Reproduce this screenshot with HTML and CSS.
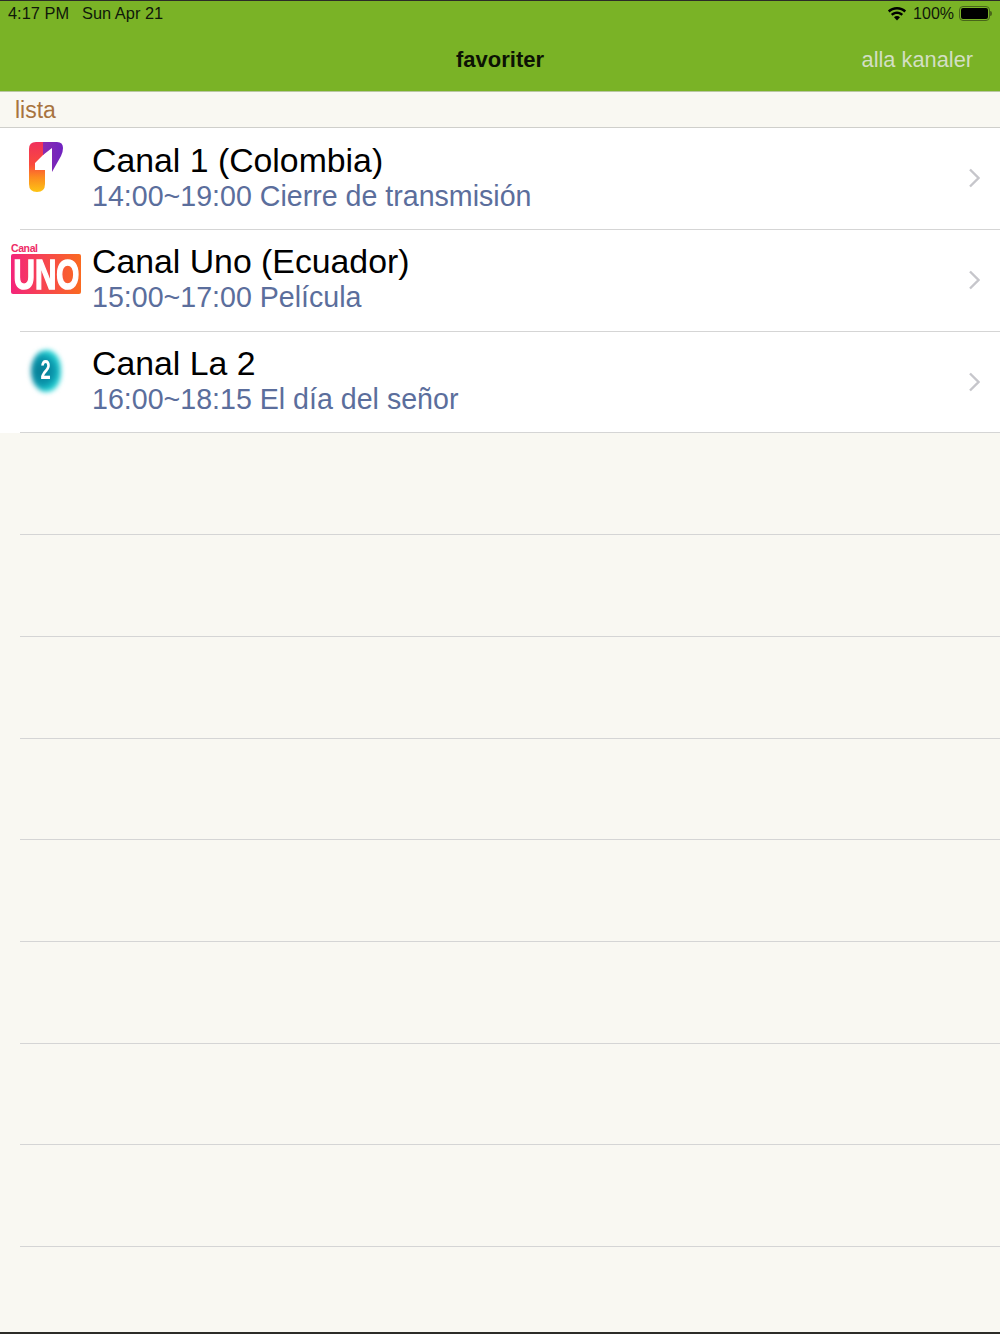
FILE: index.html
```html
<!DOCTYPE html>
<html lang="en">
<head>
    <meta charset="UTF-8">
    <meta name="viewport" content="width=device-width, initial-scale=1.0">
    <title>favoriter</title>
    <link rel="stylesheet" href="styles.css">
</head>
<body>
  <div class="app">
    <header class="top-bar">
      <div class="status-bar">
        <div class="status-left">
          <span>4:17 PM</span>
          <span>Sun Apr 21</span>
        </div>
        <div class="status-right">
          <svg class="wifi" width="20" height="15" viewBox="0 0 20 15">
            <path d="M10 1C6.4 1 3.2 2.4.9 4.6l1.7 1.8C4.5 4.6 7.1 3.5 10 3.500s5.500 1.100 7.400 2.900l1.700-1.800C16.800 2.400 13.600 1 10 1z"/>
            <path d="M10 5.500c-2.400 0-4.500.9-6.100 2.400l1.700 1.800C6.800 8.600 8.300 8 10 8s3.200.6 4.400 1.700l1.700-1.800C14.500 6.400 12.400 5.500 10 5.500z"/>
            <path d="M10 10c-1.100 0-2.200.4-3 1.200l3 3.300 3-3.300c-.8-.8-1.900-1.200-3-1.200z"/>
          </svg>
          <span class="battery-pct">100%</span>
          <div class="battery"><div class="battery-level"></div></div>
          <div class="battery-tip"></div>
        </div>
      </div>
      <nav class="nav-bar">
        <span class="nav-side"></span>
        <h1 class="nav-title">favoriter</h1>
        <a class="nav-side nav-action">alla kanaler</a>
      </nav>
    </header>

    <div class="section-head">lista</div>

    <div class="row">
      <div class="row-logo">
        <svg width="36" height="52" viewBox="0 0 36 52">
          <defs>
            <linearGradient id="oneRed" x1="0" y1="0" x2="0" y2="1">
              <stop offset="0" stop-color="#f0305c"/>
              <stop offset="0.45" stop-color="#fa4a3c"/>
              <stop offset="0.7" stop-color="#fc8a20"/>
              <stop offset="1" stop-color="#fdc414"/>
            </linearGradient>
            <linearGradient id="onePurple" x1="0" y1="0" x2="1" y2="0">
              <stop offset="0" stop-color="#8a2bb0"/>
              <stop offset="1" stop-color="#6f22c0"/>
            </linearGradient>
          </defs>
          <path d="M1 8Q1 1 8 1H16V13L7 22V29H17V43Q17 51 9 51Q1 51 1 43Z" fill="url(#oneRed)"/>
          <path d="M15 1H29Q35 1 35 7Q35 11 33 15L24 31V7L15 14Z" fill="url(#onePurple)"/>
        </svg>
      </div>
      <div class="row-text">
        <div class="row-title">Canal 1 (Colombia)</div>
        <div class="row-sub">14:00~19:00 Cierre de transmisión</div>
      </div>
      <svg class="chevron" width="12" height="20" viewBox="0 0 12 20"><path d="M2 1.500l8.500 8.500-8.500 8.500"/></svg>
    </div>

    <div class="row">
      <div class="row-logo">
        <div class="uno-logo">
          <span class="uno-small">Canal</span>
          <div class="uno-box"><span class="uno-word">UNO</span></div>
        </div>
      </div>
      <div class="row-text">
        <div class="row-title">Canal Uno (Ecuador)</div>
        <div class="row-sub">15:00~17:00 Película</div>
      </div>
      <svg class="chevron" width="12" height="20" viewBox="0 0 12 20"><path d="M2 1.500l8.500 8.500-8.500 8.500"/></svg>
    </div>

    <div class="row">
      <div class="row-logo">
        <div class="two-logo"><span class="two-digit">2</span></div>
      </div>
      <div class="row-text">
        <div class="row-title">Canal La 2</div>
        <div class="row-sub">16:00~18:15 El día del señor</div>
      </div>
      <svg class="chevron" width="12" height="20" viewBox="0 0 12 20"><path d="M2 1.500l8.500 8.500-8.500 8.500"/></svg>
    </div>

    <div class="row row-empty"></div>
    <div class="row row-empty"></div>
    <div class="row row-empty"></div>
    <div class="row row-empty"></div>
    <div class="row row-empty"></div>
    <div class="row row-empty"></div>
    <div class="row row-empty"></div>
    <div class="row row-empty"></div>
  </div>
</body>
</html>
```

FILE: styles.css
```css
html, body {
  margin: 0;
  padding: 0;
}
body {
  font-family: "Liberation Sans", Arial, sans-serif;
  background: #f9f8f2;
}
.app {
  display: flex;
  flex-direction: column;
  height: 1334px;
  overflow: hidden;
  border-top: 1px solid #2c2c28;
  border-bottom: 2px solid #2c2c28;
  box-sizing: border-box;
}
.top-bar {
  background: #7ab326;
  border-bottom: 1px solid #b9c7a2;
  height: 90.4px;
  flex: none;
}
.status-bar {
  display: flex;
  justify-content: space-between;
  align-items: center;
  height: 25px;
  padding: 0 8px;
  font-size: 16.4px;
  color: #10180a;
}
.status-left {
  display: flex;
  gap: 13px;
}
.status-right {
  display: flex;
  align-items: center;
  gap: 6px;
  font-size: 16px;
}
.wifi {
  fill: #000;
}
.battery-pct {
  margin-right: -1px;
}
.battery {
  width: 31px;
  height: 15px;
  border: 1px solid #48651a;
  border-radius: 4px;
  padding: 1px;
  box-sizing: border-box;
  margin-right: -6px;
}
.battery-level {
  height: 100%;
  background: #000;
  border-radius: 2px;
}
.battery-tip {
  width: 2px;
  height: 5px;
  background: #48651a;
  border-radius: 0 2px 2px 0;
}
.nav-bar {
  display: flex;
  align-items: center;
  justify-content: space-between;
  height: 63.4px;
  padding: 2px 27px 0;
}
.nav-side {
  flex: 1;
}
.nav-title {
  margin: 0;
  font-size: 22px;
  font-weight: bold;
  color: #0c1204;
}
.nav-action {
  text-align: right;
  font-size: 21.8px;
  color: #d3dfc4;
}
.section-head {
  flex: none;
  height: 36px;
  box-sizing: border-box;
  line-height: 37px;
  padding-left: 15px;
  font-size: 23px;
  color: #a8743f;
  border-bottom: 1px solid #cfcfcb;
}
.row {
  flex: none;
  display: flex;
  align-items: center;
  height: 101.69px;
  background: #fff;
  position: relative;
}
.row::after {
  content: "";
  position: absolute;
  left: 20px;
  right: 0;
  bottom: 0;
  height: 1px;
  background: #d5d5d5;
}
.row-empty {
  background: transparent;
}
.row-logo {
  flex: none;
  width: 92px;
  display: flex;
  justify-content: center;
  padding-bottom: 24px;
  box-sizing: border-box;
}
.row-text {
  flex: 1;
  padding-bottom: 5px;
}
.row-title {
  font-size: 33.8px;
  line-height: 38px;
  color: #000;
}
.row-sub {
  font-size: 28.6px;
  line-height: 34px;
  color: #5b6e9c;
}
.chevron {
  flex: none;
  margin: 0 20px 2px 0;
  fill: none;
  stroke: #c6c6cb;
  stroke-width: 2.4;
}
.uno-logo {
  display: flex;
  flex-direction: column;
  width: 70px;
}
.uno-small {
  font-size: 10.5px;
  line-height: 11px;
  font-weight: bold;
  letter-spacing: -.4px;
  color: #ee2c66;
}
.uno-box {
  height: 40px;
  display: flex;
  justify-content: center;
  align-items: center;
  border-radius: 2px;
  background: linear-gradient(90deg, #f4247a, #fa6a20);
}
.uno-word {
  display: inline-block;
  font-size: 40px;
  line-height: 40px;
  font-weight: bold;
  color: #fff;
  -webkit-text-stroke: 1.5px #fff;
  transform: scale(.74, 1.05);
}
.two-logo {
  position: relative;
  width: 30px;
  height: 42px;
  display: flex;
  justify-content: center;
  align-items: center;
}
.two-logo::before {
  content: "";
  position: absolute;
  inset: 0 0 0 0;
  border-radius: 55% 50% 50% 55%;
  background: radial-gradient(ellipse at 35% 50%, #067a92 0%, #0a96ac 45%, #28d8d8 72%, rgba(200,250,250,.4) 100%);
  filter: blur(2.5px);
}
.two-digit {
  position: relative;
  font-size: 27px;
  font-weight: bold;
  color: #fff;
  transform: scaleX(.68);
}
```
